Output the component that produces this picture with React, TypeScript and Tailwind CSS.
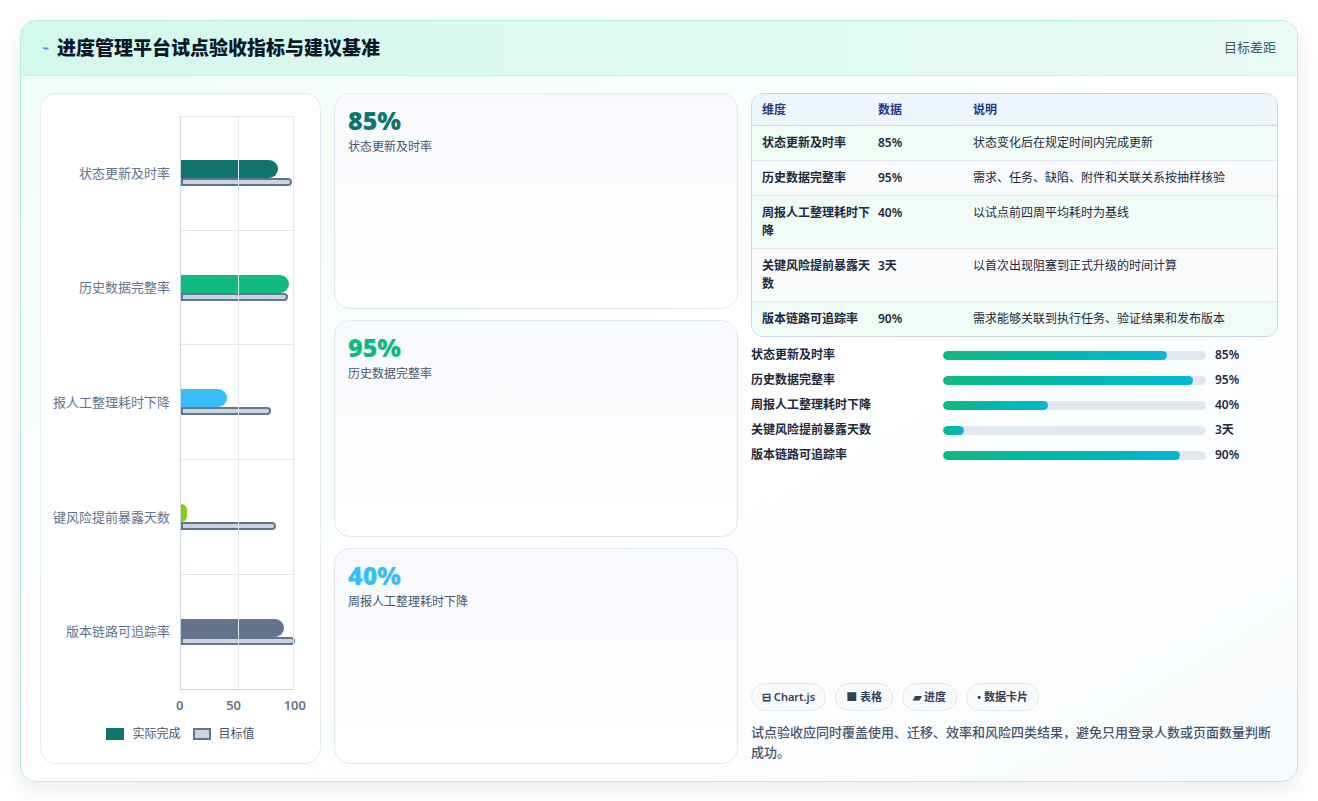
import React from "react";

const rows = [
  { n: "状态更新及时率", short: "状态更新及时率", v: "85%", a: 85, t: 97, c: "#0f766e", d: "状态变化后在规定时间内完成更新" },
  { n: "历史数据完整率", short: "历史数据完整率", v: "95%", a: 95, t: 94, c: "#10b981", d: "需求、任务、缺陷、附件和关联关系按抽样核验" },
  { n: "周报人工整理耗时下降", short: "报人工整理耗时下降", v: "40%", a: 40, t: 79, c: "#38bdf8", d: "以试点前四周平均耗时为基线" },
  { n: "关键风险提前暴露天数", short: "键风险提前暴露天数", v: "3天", a: 5, t: 83, c: "#84cc16", d: "以首次出现阻塞到正式升级的时间计算" },
  { n: "版本链路可追踪率", short: "版本链路可追踪率", v: "90%", a: 90, t: 100, c: "#64748b", d: "需求能够关联到执行任务、验证结果和发布版本" },
];

const font = { fontFamily: '"Noto Sans", "Noto Sans CJK SC", sans-serif' };

function Chart() {
  const W = 114;
  return (
    <div className="rounded-2xl border border-slate-200 bg-white w-[281px] shrink-0 flex flex-col pt-[22px] pb-[20px]">
      <div className="flex flex-1">
        <div className="w-[139px] flex flex-col">
          {rows.map((r) => (
            <div key={r.n} className="flex-1 flex items-center justify-end pr-[10px] text-[13px] text-slate-500 whitespace-nowrap overflow-hidden">
              {r.short}
            </div>
          ))}
        </div>
        <div className="relative w-[114px] border-l border-slate-300 border-b border-b-slate-300">
          <div className="absolute inset-y-0 left-[57px] border-l border-slate-200" />
          <div className="absolute inset-y-0 right-0 border-l border-slate-200" />
          <div className="absolute inset-x-0 top-0 border-t border-slate-200" />
          <div className="flex flex-col h-full">
            {rows.map((r, i) => (
              <div key={r.n} className={"flex-1 flex flex-col justify-center " + (i < 4 ? "border-b border-slate-200" : "")}>
                <div className="h-[18px] rounded-r-[9px]" style={{ width: (r.a * W) / 100, background: r.c }} />
                <div className="h-[8px] rounded-r-[4px] border-2 border-slate-500 bg-slate-300" style={{ width: (r.t * W) / 100 }} />
              </div>
            ))}
          </div>
        </div>
      </div>
      <div className="flex ml-[139px] w-[114px] justify-between text-[13px] font-semibold text-slate-500 mt-[6px]">
        <span className="-ml-[4px]">0</span><span>50</span><span className="-mr-[12px]">100</span>
      </div>
      <div className="flex justify-center items-center gap-2 text-[12px] text-slate-600 mt-[10px]">
        <span className="w-[18px] h-[12px] bg-[#0f766e]" /> 实际完成
        <span className="w-[18px] h-[12px] bg-slate-300 border-2 border-slate-500 ml-1" /> 目标值
      </div>
    </div>
  );
}

function Card({ v, l, c }: { v: string; l: string; c: string }) {
  return (
    <div className="flex-1 rounded-2xl border border-slate-200 bg-gradient-to-b from-[#f7f9fd] to-white px-[13px] py-[10px]">
      <div className="text-[25px] font-extrabold leading-[32px]" style={{ color: c, fontFamily: '"Open Sans", sans-serif' }}>{v}</div>
      <div className="text-[12px] text-slate-600 mt-[2px]">{l}</div>
    </div>
  );
}

export default function App() {
  return (
    <div className="min-h-[801px] bg-white p-[20px]" style={font}>
      <div className="h-[762px] rounded-2xl border border-[#b7ecdc] overflow-hidden flex flex-col shadow-[0_8px_24px_rgba(0,0,0,0.08)] bg-gradient-to-br from-[#effcf6] via-white to-[#f8fbfd]">
        <div className="h-[55px] shrink-0 bg-gradient-to-r from-[#d3f8ec] to-[#e8fbf5] border-b border-[#c9f1e3] flex items-center justify-between px-[21px]">
          <div className="flex items-center gap-[8px]">
            <span className="text-[#3b82f6] text-[12px]">⌁</span>
            <span className="text-[19px] font-extrabold text-slate-900">进度管理平台试点验收指标与建议基准</span>
          </div>
          <span className="text-[13px] text-slate-600">目标差距</span>
        </div>
        <div className="flex-1 flex gap-[13px] px-[19px] pt-[17px] pb-[17px]">
          <Chart />
          <div className="w-[404px] flex flex-col gap-[11px]">
            <Card v="85%" l="状态更新及时率" c="#0f766e" />
            <Card v="95%" l="历史数据完整率" c="#10b981" />
            <Card v="40%" l="周报人工整理耗时下降" c="#38bdf8" />
          </div>
          <div className="flex-1 flex flex-col">
            <div className="rounded-xl border border-slate-300 overflow-hidden text-[12px]">
              <div className="flex h-[32px] items-center bg-[#eef5fd] border-b border-slate-300 text-[#1e3a8a] font-semibold">
                <div className="w-[126px] pl-[10px]">维度</div><div className="w-[95px]">数据</div><div>说明</div>
              </div>
              {rows.map((r, i) => (
                <div key={r.n} className={"flex py-[8px] leading-[18px] text-slate-800 " + (i % 2 ? "bg-[#f8fafc]" : "bg-[#f1fbf6]") + (i < 4 ? " border-b border-slate-200" : "")}>
                  <div className="w-[126px] pl-[10px] pr-2 font-semibold">{r.n}</div>
                  <div className="w-[95px] font-semibold">{r.v}</div>
                  <div className="flex-1">{r.d}</div>
                </div>
              ))}
            </div>
            <div className="flex flex-col gap-[7px] mt-[9px]">
              {rows.map((r) => (
                <div key={r.n} className="flex items-center h-[18px] text-[12px] font-semibold text-slate-800">
                  <div className="w-[192px]">{r.n}</div>
                  <div className="w-[263px] h-[9px] rounded-full bg-slate-200 overflow-hidden">
                    <div className="h-full rounded-full bg-gradient-to-r from-[#10b981] to-[#06b6d4]" style={{ width: `${r.a === 5 ? 8 : r.a}%` }} />
                  </div>
                  <div className="ml-[9px]">{r.v}</div>
                </div>
              ))}
            </div>
            <div className="flex-1" />
            <div className="flex gap-[9px] text-[11px] font-semibold text-slate-700">
              {["⊟ Chart.js", "■ 表格", "▰ 进度", "• 数据卡片"].map((t) => (
                <span key={t} className="rounded-full border border-slate-200 bg-[#f8fafc] px-[10px] h-[28px] flex items-center">{t}</span>
              ))}
            </div>
            <p className="text-[13px] text-slate-600 font-medium leading-[20px] mt-[11px] mb-[2px]">
              试点验收应同时覆盖使用、迁移、效率和风险四类结果，避免只用登录人数或页面数量判断成功。
            </p>
          </div>
        </div>
      </div>
    </div>
  );
}
